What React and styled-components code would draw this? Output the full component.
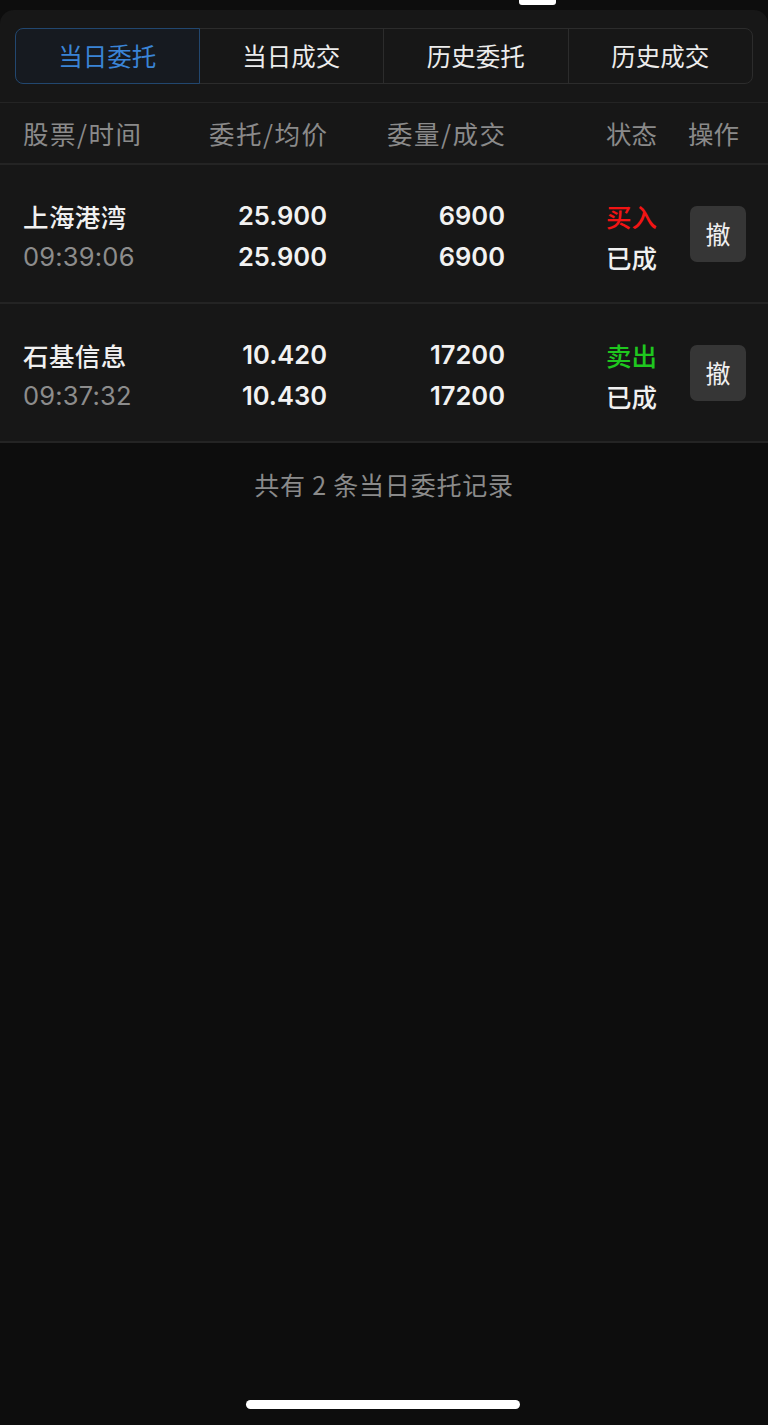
import React from "react";
import styled, { createGlobalStyle } from "styled-components";

const Global = createGlobalStyle`
  html, body { margin: 0; padding: 0; background: #0d0d0d; }
  body { font-family: "Noto Sans CJK SC", "Noto Sans", sans-serif; }
  * { box-sizing: border-box; }
`;

const CJK = `"Noto Sans CJK SC", "Noto Sans", sans-serif`;
const NUM = `Inter, "Noto Sans CJK SC", sans-serif`;

const Screen = styled.div`
  width: 768px;
  height: 1425px;
  background: #0d0d0d;
  display: flex;
  flex-direction: column;
  position: relative;
  overflow: hidden;
`;

const TopStrip = styled.div`
  height: 10px;
  display: flex;
  justify-content: flex-start;
  padding-left: 519px;
`;

const TopPill = styled.div`
  width: 37px;
  height: 5px;
  background: #fff;
  border-radius: 0 0 3px 3px;
`;

const Panel = styled.div`
  background: #171717;
  border-radius: 14px 14px 0 0;
  display: flex;
  flex-direction: column;
`;

const TabBar = styled.div`
  margin: 18px 15px 0;
  display: grid;
  grid-template-columns: repeat(4, 1fr);
  height: 56px;
`;

const Tab = styled.div`
  display: flex;
  align-items: center;
  justify-content: center;
  font-family: ${CJK};
  font-size: 24.5px;
  line-height: 1;
  color: ${(p) => (p.$active ? "#3a84d6" : "#ececec")};
  background: ${(p) => (p.$active ? "#161a20" : "transparent")};
  border: 1px solid ${(p) => (p.$active ? "#22476f" : "#2c2c2c")};
  margin-left: -1px;
  position: relative;
  z-index: ${(p) => (p.$active ? 1 : 0)};
  &:first-child { margin-left: 0; border-radius: 8px 0 0 8px; }
  &:last-child { border-radius: 0 8px 8px 0; }
`;

const Divider = styled.div`
  height: 1px;
  background: #242424;
`;

const TopDivider = styled(Divider)`
  margin-top: 18px;
`;

const Grid = styled.div`
  display: grid;
  grid-template-columns: 177px 127px 178px 152px 1fr;
  padding-left: 23px;
  align-items: center;
`;

const HeaderRow = styled(Grid)`
  height: 62px;
  border-bottom: 2px solid #242424;
`;

const HeadCell = styled.div`
  font-family: ${CJK};
  font-size: 25.5px;
  line-height: 1;
  color: #8a8a8a;
  text-align: ${(p) => p.$align || "left"};
  padding-left: ${(p) => p.$pl || 0}px;
  letter-spacing: ${(p) => p.$ls || 0}px;
  margin-right: ${(p) => (p.$align === "right" ? -(p.$ls || 0) : 0)}px;
`;

const Row = styled(Grid)`
  height: 139px;
  border-bottom: 2px solid #242424;
  padding-top: 5px;
`;

const Cell = styled.div`
  display: flex;
  flex-direction: column;
  align-items: ${(p) => (p.$right ? "flex-end" : "flex-start")};
`;

const Name = styled.div`
  font-family: ${CJK};
  font-size: 25.5px;
  font-weight: 500;
  line-height: 41px;
  color: #f0f0f0;
  letter-spacing: 0.4px;
`;

const Time = styled.div`
  font-family: ${NUM};
  font-size: 25.5px;
  font-weight: 400;
  line-height: 41px;
  color: #8c8c8c;
  letter-spacing: 0.2px;
`;

const Num = styled.div`
  font-family: ${NUM};
  font-size: 25.5px;
  font-weight: 600;
  line-height: 41px;
  color: #f2f2f2;
`;

const Side = styled.div`
  font-family: ${CJK};
  font-size: 25.5px;
  font-weight: 500;
  line-height: 41px;
  color: ${(p) => (p.$buy ? "#f21414" : "#1fc71f")};
`;

const Status = styled.div`
  font-family: ${CJK};
  font-size: 25.5px;
  font-weight: 500;
  line-height: 41px;
  color: #f0f0f0;
`;

const CancelButton = styled.button`
  margin-left: 33px;
  width: 56px;
  height: 56px;
  border: none;
  border-radius: 7px;
  background: #363636;
  color: #f0f0f0;
  font-family: ${CJK};
  font-size: 25px;
  line-height: 1;
  padding: 0;
  margin-top: -5px;
  display: flex;
  align-items: center;
  justify-content: center;
`;

const Footer = styled.div`
  text-align: center;
  font-family: ${CJK};
  font-size: 25px;
  line-height: 1;
  color: #8a8a8a;
  padding-top: 29px;
  letter-spacing: 0.8px;
`;

const Spacer = styled.div`
  flex: 1;
`;

const HomeIndicator = styled.div`
  align-self: center;
  width: 274px;
  height: 9px;
  border-radius: 5px;
  background: #fff;
  margin-left: -2px;
  margin-bottom: 16px;
`;

const tabs = ["当日委托", "当日成交", "历史委托", "历史成交"];

const orders = [
  {
    name: "上海港湾",
    time: "09:39:06",
    price: "25.900",
    avg: "25.900",
    qty: "6900",
    filled: "6900",
    side: "买入",
    buy: true,
    status: "已成",
  },
  {
    name: "石基信息",
    time: "09:37:32",
    price: "10.420",
    avg: "10.430",
    qty: "17200",
    filled: "17200",
    side: "卖出",
    buy: false,
    status: "已成",
  },
];

export default function App() {
  return (
    <>
      <Global />
      <Screen>
        <TopStrip>
          <TopPill />
        </TopStrip>
        <Panel>
          <TabBar>
            {tabs.map((t, i) => (
              <Tab key={t} $active={i === 0}>
                {t}
              </Tab>
            ))}
          </TabBar>
          <TopDivider />
          <HeaderRow>
            <HeadCell $ls={1.5}>股票/时间</HeadCell>
            <HeadCell $align="right" $ls={1.5}>委托/均价</HeadCell>
            <HeadCell $align="right" $ls={1.5}>委量/成交</HeadCell>
            <HeadCell $align="right">状态</HeadCell>
            <HeadCell $pl={31}>操作</HeadCell>
          </HeaderRow>
          {orders.map((o) => (
            <Row key={o.name}>
              <Cell>
                <Name>{o.name}</Name>
                <Time>{o.time}</Time>
              </Cell>
              <Cell $right>
                <Num>{o.price}</Num>
                <Num>{o.avg}</Num>
              </Cell>
              <Cell $right>
                <Num>{o.qty}</Num>
                <Num>{o.filled}</Num>
              </Cell>
              <Cell $right>
                <Side $buy={o.buy}>{o.side}</Side>
                <Status>{o.status}</Status>
              </Cell>
              <Cell>
                <CancelButton>撤</CancelButton>
              </Cell>
            </Row>
          ))}
        </Panel>
        <Footer>共有 2 条当日委托记录</Footer>
        <Spacer />
        <HomeIndicator />
      </Screen>
    </>
  );
}
